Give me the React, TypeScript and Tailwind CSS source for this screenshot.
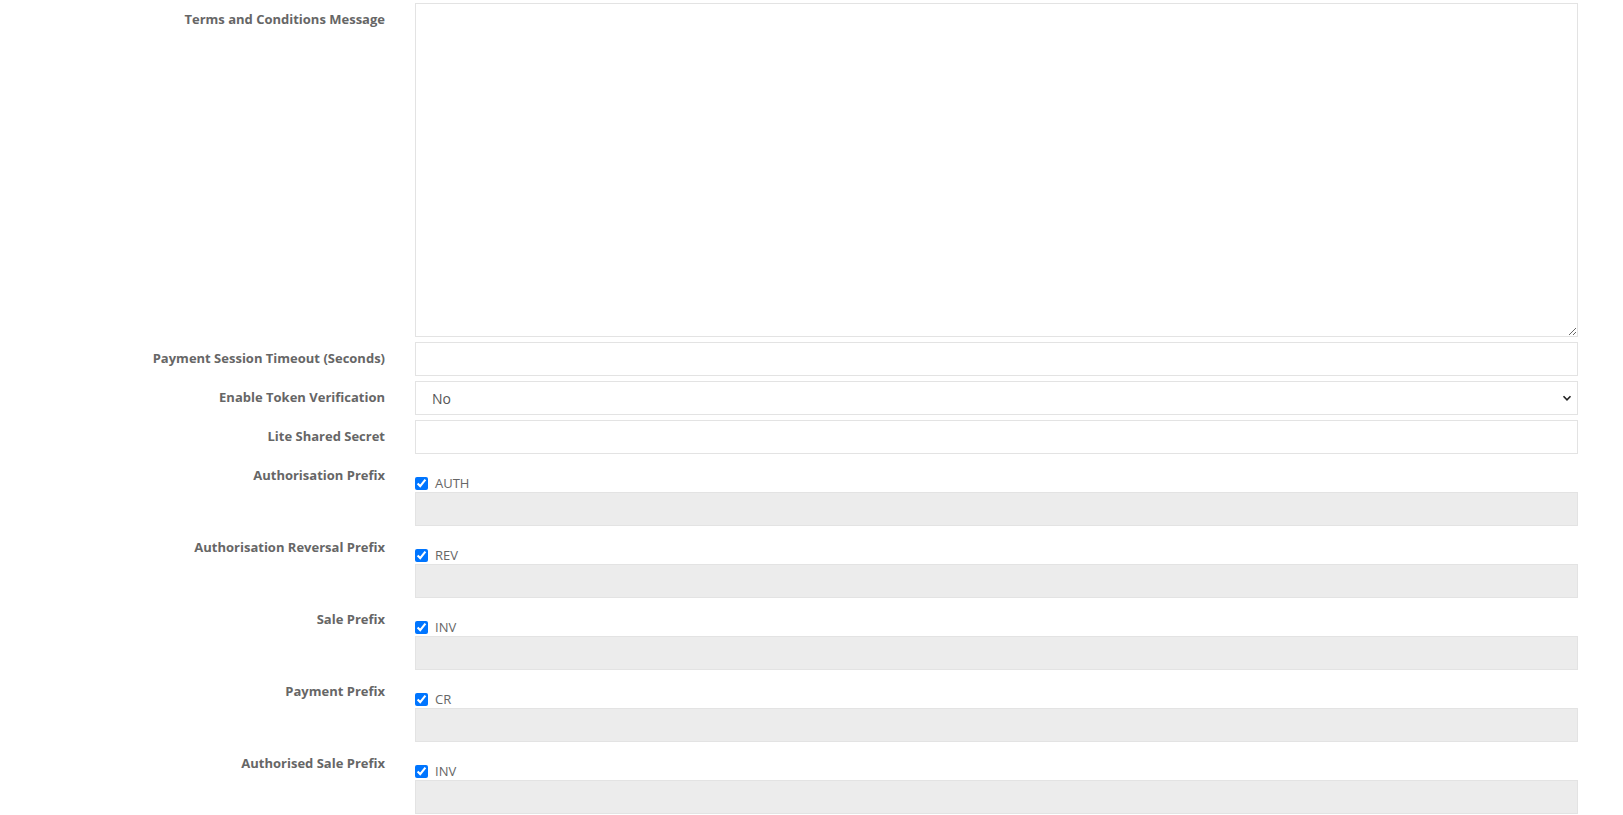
import React from 'react';

const prefixes = [
  { label: 'Authorisation Prefix', value: 'AUTH' },
  { label: 'Authorisation Reversal Prefix', value: 'REV' },
  { label: 'Sale Prefix', value: 'INV' },
  { label: 'Payment Prefix', value: 'CR' },
  { label: 'Authorised Sale Prefix', value: 'INV' },
];

function Row({ label, children }: { label: string; children: React.ReactNode }) {
  return (
    <div className="flex mb-[5px]">
      <label className="w-[385px] shrink-0 text-right pt-[6px] leading-[20px] text-[13px] font-bold text-[#666]">
        {label}
      </label>
      <div className="ml-[30px] flex-1">{children}</div>
    </div>
  );
}

const inputCls =
  'block w-full h-[34px] border border-[#e3e3e3] bg-white px-4 text-[14px] text-[#555] outline-none';

export default function App() {
  return (
    <div className="min-h-screen bg-white pt-[3px] pr-[45px] font-['Open_Sans',sans-serif]">
      <Row label="Terms and Conditions Message">
        <textarea className="block w-full h-[334px] border border-[#e3e3e3] bg-white px-4 py-2 text-[14px] text-[#555] outline-none resize-y" />
      </Row>

      <Row label="Payment Session Timeout (Seconds)">
        <input type="text" className={inputCls} />
      </Row>

      <Row label="Enable Token Verification">
        <div className="relative">
          <select className={inputCls + ' appearance-none'} defaultValue="No">
            <option>No</option>
            <option>Yes</option>
          </select>
          <svg
            className="absolute right-[6px] top-[12px] pointer-events-none"
            width="10"
            height="10"
            viewBox="0 0 10 10"
            fill="none"
            stroke="#222"
            strokeWidth="1.6"
          >
            <path d="M1.5 3.2 5 6.8 8.5 3.2" />
          </svg>
        </div>
      </Row>

      <Row label="Lite Shared Secret">
        <input type="text" className={inputCls} />
      </Row>

      {prefixes.map((p) => (
        <Row key={p.label} label={p.label}>
          <div className="pt-[17px]">
            <div className="flex items-center gap-[7px] h-[15px]">
              <input type="checkbox" defaultChecked className="w-[13px] h-[13px] m-0" />
              <span className="text-[13px] text-[#666]">{p.value}</span>
            </div>
            <input
              type="text"
              disabled
              className="block w-full h-[34px] mt-[1px] border border-[#e3e3e3] bg-[#ececec] px-4"
            />
          </div>
        </Row>
      ))}
    </div>
  );
}
